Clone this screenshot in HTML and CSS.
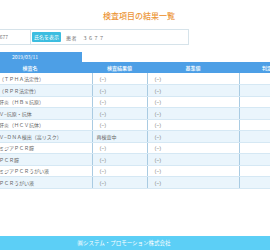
FILE: index.html
```html
<!DOCTYPE html>
<html lang="ja">
<head>
  <meta charset="UTF-8">
  <title>検査項目の結果一覧</title>
  <meta name="viewport" content="width=device-width, initial-scale=1.0">
  <link rel="stylesheet" href="styles.css">
</head>
<body>
  <div class="page">
    <h1 class="title">検査項目の結果一覧</h1>

    <div class="search">
      <div class="search-id">3677</div>
      <button class="btn-name">氏名を表示</button>
      <span class="patient">患者　３６７７</span>
    </div>

    <div class="tabs">
      <span class="tab">2019/03/11</span>
    </div>

    <table class="result">
      <thead>
        <tr>
          <th class="col-name">検査名</th>
          <th class="col-value">検査結果値</th>
          <th class="col-range">基準値</th>
          <th class="col-judge">判定</th>
          <th class="col-note">コメント</th>
        </tr>
      </thead>
      <tbody>
        <tr><td>梅毒（ＴＰＨＡ法定性）</td><td>（−）</td><td>（−）</td><td></td><td></td></tr>
        <tr><td>梅毒（ＲＰＲ法定性）</td><td>（−）</td><td>（−）</td><td></td><td></td></tr>
        <tr><td>Ｂ型肝炎（ＨＢｓ抗原）</td><td>（−）</td><td>（−）</td><td></td><td></td></tr>
        <tr><td>ＨＩＶ−抗原・抗体</td><td>（−）</td><td>（−）</td><td></td><td></td></tr>
        <tr><td>Ｃ型肝炎（ＨＣＶ抗体）</td><td>（−）</td><td>（−）</td><td></td><td></td></tr>
        <tr><td>ＨＰＶ−ＤＮＡ検出（高リスク）</td><td>再検査中</td><td>（−）</td><td></td><td></td></tr>
        <tr><td>クラミジアＰＣＲ膣</td><td>（−）</td><td>（−）</td><td></td><td></td></tr>
        <tr><td>淋菌ＰＣＲ膣</td><td>（−）</td><td>（−）</td><td></td><td></td></tr>
        <tr><td>クラミジアＰＣＲうがい液</td><td>（−）</td><td>（−）</td><td></td><td></td></tr>
        <tr><td>淋菌ＰＣＲうがい液</td><td>（−）</td><td>（−）</td><td></td><td></td></tr>
      </tbody>
    </table>
  </div>

  <footer class="footer">㈱システム・プロモーション株式会社</footer>
</body>
</html>
```

FILE: styles.css
```css
* { box-sizing: border-box; }

html, body {
  height: 100%;
}

body {
  margin: 0;
  background: #ffffff;
  font-family: "Noto Sans CJK JP", "Noto Sans", sans-serif;
  color: #666666;
  display: flex;
  flex-direction: column;
  overflow: hidden;
}

.page {
  margin-left: -32px;
  width: 342px;
  flex-shrink: 0;
}

.title {
  margin: 0;
  padding-top: 11px;
  font-size: 8px;
  line-height: 10px;
  font-weight: 500;
  color: #ec9538;
  text-align: center;
}

.search {
  display: flex;
  align-items: center;
  margin: 8px 0 0 22px;
  width: 199px;
  height: 16px;
  border: 1px solid #d6e3ea;
  font-size: 5px;
}

.search-id {
  width: 40px;
  height: 100%;
  padding-left: 6px;
  line-height: 14px;
  border-right: 1px solid #d6e3ea;
  color: #777;
}

.btn-name {
  margin-left: 1px;
  width: 29px;
  height: 10px;
  padding: 0;
  border: none;
  border-radius: 1px;
  background: #3cbde0;
  color: #ffffff;
  font-family: inherit;
  font-size: 5px;
  line-height: 10px;
}

.patient {
  margin-left: 5px;
  color: #777;
  letter-spacing: 0.5px;
}

.tabs {
  margin-top: 7px;
  display: flex;
}

.tab {
  width: 114px;
  height: 10px;
  background: #4d9fe6;
  color: #ffffff;
  font-size: 5px;
  line-height: 10px;
  text-align: center;
}

.result {
  border-collapse: collapse;
  table-layout: fixed;
  width: 420px;
  font-size: 5px;
}

.result th {
  height: 11px;
  padding: 0;
  background: #4d9fe6;
  color: #ffffff;
  font-weight: 500;
  text-align: center;
}

.col-name { width: 124px; }
.col-value { width: 55px; }
.col-range { width: 92px; }
.col-judge { width: 56px; }

.result td {
  height: 11.5px;
  padding: 0 0 0 21px;
  border-bottom: 1px solid #d5e8f4;
  white-space: nowrap;
  overflow: hidden;
}

.result td + td {
  padding-left: 4px;
  border-left: 1px solid #a9cbe2;
}

.result tbody tr:nth-child(even) td {
  background: #eaf5fc;
}

.footer {
  margin-top: auto;
  height: 14px;
  padding-right: 22px;
  background: #5ccff6;
  color: #ffffff;
  font-size: 5.5px;
  line-height: 14px;
  text-align: center;
}
```
